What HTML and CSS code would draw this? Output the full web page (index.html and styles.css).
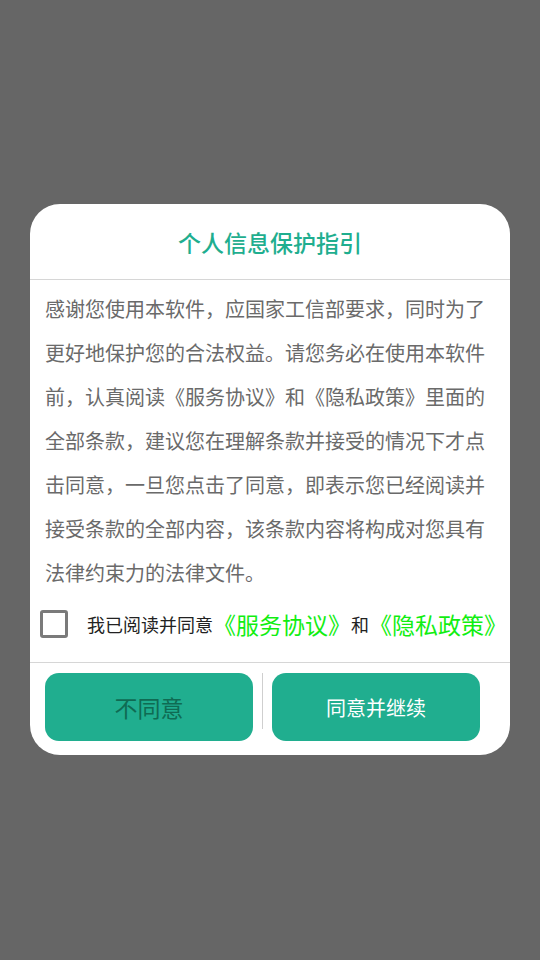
FILE: index.html
```html
<!DOCTYPE html>
<html lang="zh-CN">
<head>
<meta charset="utf-8">
<title>个人信息保护指引</title>
<link rel="stylesheet" href="styles.css">
</head>
<body>
<div class="dialog">
  <div class="header">个人信息保护指引</div>
  <div class="content">感谢您使用本软件，应国家工信部要求，同时为了更好地保护您的合法权益。请您务必在使用本软件前，认真阅读《服务协议》和《隐私政策》里面的全部条款，建议您在理解条款并接受的情况下才点击同意，一旦您点击了同意，即表示您已经阅读并接受条款的全部内容，该条款内容将构成对您具有法律约束力的法律文件。</div>
  <div class="agree">
    <span class="checkbox"></span>
    <span class="label">我已阅读并同意</span><span class="link">《服务协议》</span><span class="label">和</span><span class="link">《隐私政策》</span>
  </div>
  <div class="footer">
    <button class="btn btn-no">不同意</button>
    <span class="vline"></span>
    <button class="btn btn-yes">同意并继续</button>
  </div>
</div>
</body>
</html>
```
FILE: styles.css
```css
html, body {
  margin: 0;
  padding: 0;
}
body {
  width: 540px;
  height: 960px;
  background: #666666;
  font-family: "Noto Sans CJK SC", "Noto Sans", sans-serif;
  display: flex;
  flex-direction: column;
  align-items: center;
  padding-top: 204px;
  box-sizing: border-box;
}
.dialog {
  width: 480px;
  background: #ffffff;
  border-radius: 30px;
  overflow: hidden;
  display: flex;
  flex-direction: column;
}
.header {
  height: 75px;
  display: flex;
  align-items: center;
  justify-content: center;
  font-size: 23px;
  font-weight: 500;
  color: #1fae8f;
  border-bottom: 1px solid #d6d6d6;
}
.content {
  padding: 7px 15px 0;
  font-size: 20px;
  line-height: 44px;
  color: #6a6a6a;
}
.agree {
  display: flex;
  align-items: center;
  height: 28px;
  line-height: 28px;
  padding: 15px 0 24px 10px;
  border-bottom: 1px solid #d6d6d6;
  white-space: nowrap;
}
.checkbox {
  width: 28px;
  height: 28px;
  box-sizing: border-box;
  border: 3px solid #7a7a7a;
  border-radius: 3px;
  margin-right: 19px;
  flex: none;
}
.label {
  font-size: 18px;
  color: #222222;
}
.link {
  font-size: 23px;
  color: #11ee11;
}
.footer {
  display: flex;
  align-items: flex-start;
  padding: 10px 15px 14px;
  gap: 9px;
}
.btn {
  width: 208px;
  height: 68px;
  border: none;
  border-radius: 14px;
  background: #20ae8f;
  font-family: "Noto Sans CJK SC", "Noto Sans", sans-serif;
  padding: 0;
  flex: none;
}
.btn-no {
  font-size: 23px;
  color: #0f6b53;
}
.btn-yes {
  font-size: 20px;
  color: #ffffff;
}
.vline {
  width: 1px;
  height: 56px;
  background: #cfcfcf;
  flex: none;
}
```
